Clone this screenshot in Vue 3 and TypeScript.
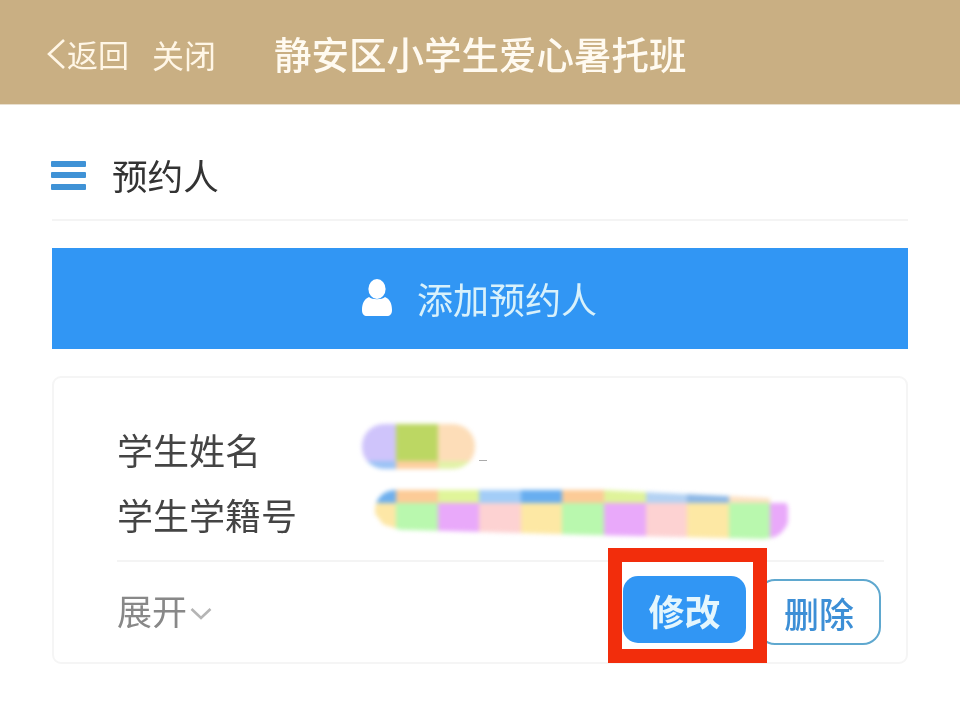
<script setup lang="ts">
const nameTop = ['#cfc4fb', '#bcd763', '#fdddb8']
const nameBottom = ['#9cc3f5', '#fdcf9f', '#e2f2a8']
const idTop = ['#6fb0ee', '#fccb97', '#e0f59a', '#a3cdf7', '#68aef0', '#fccb97', '#dff39a', '#b4d2f3', '#8db8e6', '#fde0c0']
const idBottom = ['#fde7a6', '#b9f8ae', '#e9a9fa', '#fdd2d2', '#fde8a4', '#b9f8ae', '#e9a9fa', '#fdd2d2', '#fde8a4', '#b9f8ae']
</script>

<template>
  <div class="page">
    <header class="top">
      <svg class="back-icon" viewBox="0 0 20 32" width="20" height="32" aria-hidden="true">
        <path d="M18 2 L3 16 L18 30" fill="none" stroke="#fff6e6" stroke-width="2.6" />
      </svg>
      <span class="back">返回</span>
      <span class="close">关闭</span>
      <span class="title">静安区小学生爱心暑托班</span>
    </header>

    <main class="body">
      <div class="section">
        <div class="burger"><i></i><i></i><i></i></div>
        <span class="section-name">预约人</span>
      </div>

      <div class="add">
        <svg class="person" viewBox="0 0 30 37" width="30" height="37" aria-hidden="true">
          <ellipse cx="15" cy="10" rx="8.6" ry="10" fill="#fff" />
          <path d="M7 18 C10 21 20 21 23 18 C28 20 30 25 30 31 C30 35 28 37 25 37 L5 37 C2 37 0 35 0 31 C0 25 2 20 7 18 Z" fill="#fff" />
        </svg>
        <span class="add-text">添加预约人</span>
      </div>

      <section class="card">
        <div class="row row-name">
          <span class="label">学生姓名</span>
          <div class="smear smear-name">
            <div class="smear-top">
              <b v-for="(c, i) in nameTop" :key="i" :style="{ background: c }"></b>
            </div>
            <div class="smear-bottom">
              <b v-for="(c, i) in nameBottom" :key="i" :style="{ background: c }"></b>
            </div>
          </div>
          <i class="speck"></i>
        </div>
        <div class="row row-id">
          <span class="label">学生学籍号</span>
          <div class="smear smear-id">
            <div class="id-top">
              <b v-for="(c, i) in idTop" :key="i" :style="{ background: c }"></b>
            </div>
            <div class="id-bottom">
              <b v-for="(c, i) in idBottom" :key="i" :style="{ background: c }"></b>
            </div>
          </div>
        </div>
        <div class="foot">
          <div class="expand">
            <span>展开</span>
            <svg viewBox="0 0 22 13" width="22" height="13" aria-hidden="true">
              <path d="M1.5 2 L11 11 L20.5 2" fill="none" stroke="#b5b5b5" stroke-width="2.6" />
            </svg>
          </div>
          <div class="actions">
            <button class="edit" type="button">修改</button>
            <button class="remove" type="button">删除</button>
          </div>
        </div>
        <div class="red-box"></div>
      </section>
    </main>
  </div>
</template>

<style scoped>
.page {
  width: 960px;
  height: 701px;
  overflow: hidden;
  background: #fff;
  filter: blur(0.4px);
  font-family: "Noto Sans CJK SC", "Noto Sans", sans-serif;
}
.top {
  height: 105px;
  background: #c9af83;
  display: flex;
  align-items: center;
  padding-left: 46px;
  padding-top: 3px;
  color: #fff6e6;
  box-sizing: border-box;
  border-bottom: 1px solid #e8dfcf;
}
.back-icon {
  flex: none;
}
.back {
  font-size: 31px;
  margin-left: 1px;
  width: 62px;
  white-space: nowrap;
}
.close {
  font-size: 32px;
  margin-left: 23px;
  width: 64px;
  white-space: nowrap;
}
.title {
  font-size: 37.5px;
  font-weight: 500;
  margin-left: 58px;
  margin-bottom: 3px;
  white-space: nowrap;
  color: #fffaf0;
}
.body {
  padding: 0 52px;
}
.section {
  height: 116px;
  display: flex;
  align-items: center;
  border-bottom: 2px solid #f4f4f4;
  padding-top: 26px;
  box-sizing: border-box;
}
.burger {
  width: 35px;
  height: 29px;
  margin-left: -1px;
  display: flex;
  flex-direction: column;
  justify-content: space-between;
}
.burger i {
  display: block;
  height: 6px;
  border-radius: 1px;
  background: #3f92d6;
}
.section-name {
  font-size: 35.6px;
  color: #333;
  margin-left: 26px;
  line-height: 1;
}
.add {
  margin-top: 27px;
  height: 101px;
  background: #3196f4;
  display: flex;
  align-items: center;
  justify-content: center;
  padding-bottom: 2px;
  box-sizing: border-box;
}
.person {
  margin-right: 25px;
  margin-left: -1px;
}
.add-text {
  font-size: 36px;
  color: #d8f1fb;
  line-height: 1;
}
.card {
  position: relative;
  margin-top: 27px;
  height: 288px;
  box-sizing: border-box;
  border: 2px solid #f5f5f5;
  border-radius: 9px;
  padding: 0 22px 0 63px;
  display: flex;
  flex-direction: column;
}
.row {
  display: flex;
  align-items: center;
}
.row-name {
  height: 65px;
  margin-top: 38px;
}
.row-id {
  height: 66px;
}
.label {
  font-size: 36px;
  color: #444;
  white-space: nowrap;
  line-height: 1;
}
.speck {
  width: 8px;
  height: 1px;
  margin-left: 4px;
  margin-top: 24px;
  background: #aaa;
}
.smear {
  flex: none;
  filter: blur(2px);
  overflow: hidden;
  display: flex;
  flex-direction: column;
}
.smear-name {
  width: 113px;
  height: 45px;
  margin-left: 101px;
  margin-top: -5px;
  border-radius: 22px;
}
.smear-top,
.smear-bottom {
  display: grid;
  grid-template-columns: 34px 42px 37px;
}
.smear-top {
  height: 37px;
}
.smear-bottom {
  height: 8px;
}
.smear-id {
  width: 414px;
  height: 49px;
  margin-left: 78px;
  margin-top: 1px;
  border-radius: 20px 24px 24px 20px;
}
.id-top,
.id-bottom {
  display: grid;
  grid-template-columns: 21px repeat(9, 41.6px) 18px;
}
.id-top {
  height: 13px;
  clip-path: polygon(0 0, 55% 0, 100% 70%, 100% 100%, 0 100%);
}
.id-bottom {
  height: 36px;
  clip-path: polygon(0 0, 100% 0, 100% 72%, 98% 92%, 94% 100%, 50% 88%, 6% 74%, 2% 60%, 0 30%);
}
.id-bottom::after {
  content: "";
  background: #e9a9fa;
}
.foot {
  margin-top: 13px;
  flex: 1;
  border-top: 2px solid #f4f4f4;
  display: flex;
  justify-content: space-between;
  align-items: flex-start;
}
.expand {
  display: flex;
  align-items: center;
  gap: 3px;
  margin-top: 30px;
  color: #888;
  font-size: 35px;
  line-height: 1;
}
.expand svg {
  margin-top: 7px;
}
.actions {
  display: flex;
  align-items: flex-start;
  gap: 11px;
  margin-top: 14px;
  margin-right: 3px;
}
.edit {
  width: 123px;
  height: 67px;
  border: none;
  border-radius: 15px;
  background: #3196f4;
  color: #e4f6fd;
  font: 700 36px "Noto Sans CJK SC", sans-serif;
  padding: 0;
}
.remove {
  width: 124px;
  height: 66px;
  margin-top: 3px;
  border: 2px solid #5fa8cf;
  border-radius: 18px;
  background: #fff;
  color: #3d8fd6;
  font: 500 35px "Noto Sans CJK SC", sans-serif;
  padding: 0;
}
.red-box {
  position: absolute;
  left: 554px;
  top: 170px;
  width: 159px;
  height: 115px;
  box-sizing: border-box;
  border: 14px solid #f22d0c;
}
</style>
